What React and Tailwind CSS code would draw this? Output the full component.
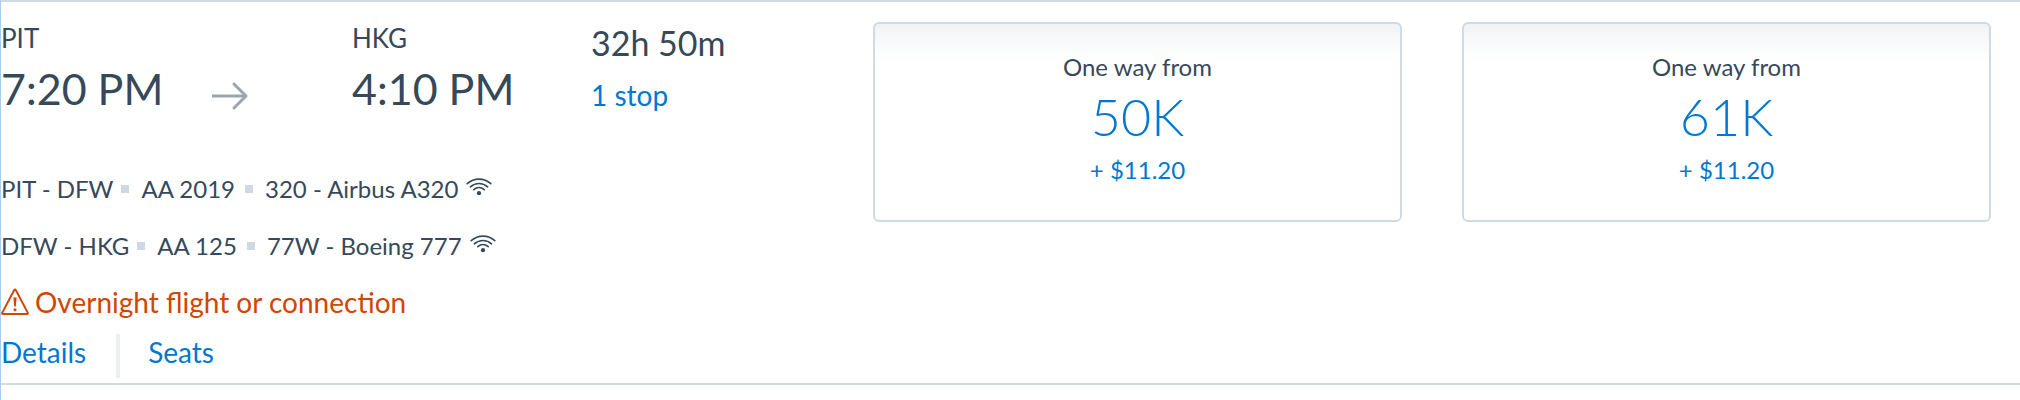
const legs = [
  { route: "PIT - DFW", flight: "AA 2019", aircraft: "320 - Airbus A320" },
  { route: "DFW - HKG", flight: "AA 125", aircraft: "77W - Boeing 777" },
];

const fares = [
  { miles: "50K", tax: "+ $11.20" },
  { miles: "61K", tax: "+ $11.20" },
];

function ArrowIcon() {
  return (
    <svg className="h-7 w-9" viewBox="0 0 36 28" fill="none" stroke="#9ba5ab" strokeWidth="3" aria-hidden="true">
      <path d="M0 14H34" />
      <path d="M22 2L34 14L22 26" strokeLinecap="round" strokeLinejoin="round" />
    </svg>
  );
}

function WifiIcon() {
  return (
    <svg className="h-[18px] w-[26px]" viewBox="0 0 26 18" fill="none" stroke="#36495a" strokeWidth="1.7" strokeLinecap="round" role="img" aria-label="Wi-Fi">
      <path d="M1.2 5.6C8 -0.4 18 -0.4 24.8 5.6" />
      <path d="M4.4 8.8C9.4 4.4 16.6 4.4 21.6 8.8" />
      <path d="M7.8 11.6C10.9 9 15.1 9 18.2 11.6" />
      <circle cx="13" cy="15.2" r="2.1" fill="#36495a" stroke="none" />
    </svg>
  );
}

function WarningIcon() {
  return (
    <svg className="h-7 w-7" viewBox="0 0 28 28" fill="none" stroke="#d14600" strokeWidth="2" aria-hidden="true">
      <path d="M13.1 2.2Q14 0.8 14.9 2.2L26.7 24.6Q27.3 26 25.8 26H2.2Q0.7 26 1.3 24.6Z" strokeLinejoin="round" />
      <path d="M12.4 9.5H15.6L14.8 18.6H13.2Z" fill="#d14600" stroke="none" />
      <circle cx="14" cy="21.8" r="1.5" fill="#d14600" stroke="none" />
    </svg>
  );
}

function Bullet() {
  return <span className="h-2 w-2 bg-[#d0d9e1]" aria-hidden="true" />;
}

function Airport({ code, time }) {
  return (
    <div>
      <div className="text-[26px] leading-8">{code}</div>
      <div className="mt-2 text-[43px] leading-[54px] whitespace-nowrap">{time}</div>
    </div>
  );
}

function Fare({ miles, tax }) {
  return (
    <button
      type="button"
      className="flex flex-1 flex-col items-center rounded-md border-2 border-[#d0dae2] bg-[linear-gradient(to_bottom,#f1f3f5_0px,#ffffff_38px)] pt-[27px] pb-[29px]"
    >
      <span className="text-2xl leading-8 text-[#36495a]">One way from</span>
      <span className="text-[52px] leading-[66px] font-light text-[#0078d2]">{miles}</span>
      <span className="text-2xl leading-[42px] text-[#0078d2]">{tax}</span>
    </button>
  );
}

export default function App() {
  return (
    <main className="min-h-screen border-l border-[#a6cdee] bg-white font-['Lato','Open_Sans',sans-serif] text-[#36495a]">
      <article className="flex items-start border-y-2 border-[#d0dae2] pt-5 pb-[5px]">
        <section className="w-[872px] shrink-0">
          <div className="flex items-start">
            <div className="flex w-[351px] items-end">
              <div className="w-[211px]">
                <Airport code="PIT" time="7:20 PM" />
              </div>
              <div className="pb-1.5">
                <ArrowIcon />
              </div>
            </div>
            <div className="w-[239px]">
              <Airport code="HKG" time="4:10 PM" />
            </div>
            <div>
              <div className="text-[34px] leading-[42px]">32h 50m</div>
              <a href="#stops" className="mt-3 block text-[28px] leading-[38px] text-[#0078d2]">1 stop</a>
            </div>
          </div>
          <ul className="mt-11 text-2xl leading-[57px]">
            {legs.map((leg) => (
              <li key={leg.route} className="flex items-center">
                <span>{leg.route}</span>
                <span className="mr-3 ml-2 flex"><Bullet /></span>
                <span>{leg.flight}</span>
                <span className="mr-3 ml-2.5 flex"><Bullet /></span>
                <span>{leg.aircraft}</span>
                <span className="ml-2 pb-1"><WifiIcon /></span>
              </li>
            ))}
          </ul>
          <p className="flex items-center gap-1.5 text-[28px] leading-14 text-[#d14600]">
            <WarningIcon />
            Overnight flight or connection
          </p>
          <div className="mt-1 flex items-start text-[28px] leading-9 text-[#0078d2]">
            <a href="#details">Details</a>
            <span className="mr-7 ml-[30px] h-11 w-1 bg-[#ebeff0]" />
            <a href="#seats">Seats</a>
          </div>
        </section>
        <section className="flex flex-1 gap-[60px] pr-[29px]">
          {fares.map((fare) => (
            <Fare key={fare.miles} {...fare} />
          ))}
        </section>
      </article>
    </main>
  );
}
